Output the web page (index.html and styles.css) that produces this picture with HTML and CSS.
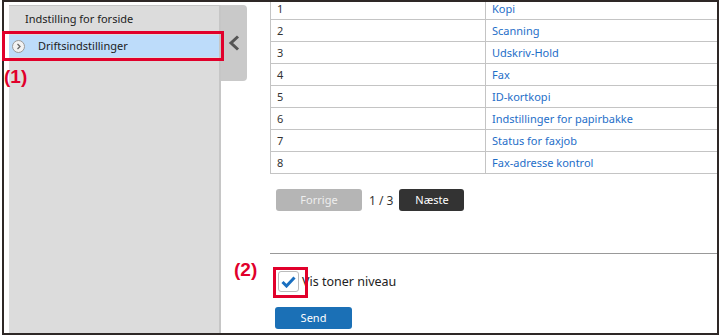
FILE: index.html
```html
<!DOCTYPE html>
<html lang="da">

<head>
    <meta charset="UTF-8">
    <meta name="viewport" content="width=device-width, initial-scale=1.0">
    <title>Driftsindstillinger</title>
    <link rel="stylesheet" href="styles.css">
</head>

<body>
    <div class="page">
        <div class="frame">
            <div class="sidebar">
                <div class="item">Indstilling for forside</div>
                <div class="item active">
                    <span class="circle">
                        <svg width="7" height="7" viewBox="0 0 7 7"><path d="M2.5 1 L5 3.5 L2.5 6" fill="none" stroke="#666" stroke-width="1.3"/></svg>
                    </span>
                    Driftsindstillinger
                </div>
            </div>
            <div class="tab">
                <svg width="12" height="16" viewBox="0 0 12 16"><path d="M10 1.5 L3 8 L10 14.5" fill="none" stroke="#555" stroke-width="3"/></svg>
            </div>
            <div class="main">
                <table class="list">
                    <tr><td class="num">1</td><td><a href="#">Kopi</a></td></tr>
                    <tr><td class="num">2</td><td><a href="#">Scanning</a></td></tr>
                    <tr><td class="num">3</td><td><a href="#">Udskriv-Hold</a></td></tr>
                    <tr><td class="num">4</td><td><a href="#">Fax</a></td></tr>
                    <tr><td class="num">5</td><td><a href="#">ID-kortkopi</a></td></tr>
                    <tr><td class="num">6</td><td><a href="#">Indstillinger for papirbakke</a></td></tr>
                    <tr><td class="num">7</td><td><a href="#">Status for faxjob</a></td></tr>
                    <tr><td class="num">8</td><td><a href="#">Fax-adresse kontrol</a></td></tr>
                </table>

                <div class="pager">
                    <span class="btn prev">Forrige</span>
                    <span class="count">1 / 3</span>
                    <span class="btn next">Næste</span>
                </div>

                <div class="rule"></div>

                <label class="check">
                    <span class="box">
                        <svg width="15" height="12" viewBox="0 0 15 12"><path d="M1.5 6 L5.5 10 L13.5 1.5" fill="none" stroke="#1a6fc0" stroke-width="3"/></svg>
                    </span>
                    Vis toner niveau
                </label>

                <span class="send">Send</span>
            </div>
        </div>

        <!-- markeringer -->
        <div class="mark mark1"></div>
        <div class="label label1">(1)</div>
        <div class="mark mark2"></div>
        <div class="label label2">(2)</div>
    </div>
</body>

</html>
```

FILE: styles.css
```css
body {
    margin: 0;
    font-family: "Noto Sans", "Open Sans", sans-serif;
    color: #222;
}

.page {
    position: relative;
    width: 720px;
    height: 335px;
    overflow: hidden;
}

.frame {
    display: flex;
    box-sizing: border-box;
    width: 717px;
    height: 335px;
    margin-left: 2px;
    border: 2px solid #2e2826;
    background: #fff;
    overflow: hidden;
}

.sidebar {
    width: 210px;
    margin-left: 5px;
    margin-top: 3px;
    background: #dcdcdc;
    border-top: 1px solid #c4c4c4;
    border-right: 2px solid #c6c6c6;
}

.item {
    height: 26px;
    line-height: 26px;
    padding-left: 16px;
    font-size: 11px;
}

.item.active {
    display: flex;
    align-items: center;
    height: 22px;
    margin-top: 3px;
    padding-left: 3px;
    background: #bddcfa;
}

.circle {
    display: flex;
    align-items: center;
    justify-content: center;
    width: 11px;
    height: 11px;
    margin-right: 13px;
    border: 1px solid #999;
    border-radius: 50%;
    background: #f2f2f2;
}

.tab {
    display: flex;
    align-items: center;
    justify-content: center;
    width: 26px;
    height: 76px;
    margin-top: 3px;
    background: #c9c9c9;
    border-radius: 0 4px 4px 0;
}

.main {
    flex: 1;
    margin-left: 23px;
}

.list {
    width: 100%;
    margin-top: -4px;
    border-collapse: collapse;
    border-left: 1px solid #c4c4c4;
    font-size: 11px;
}

.list td {
    height: 21px;
    padding: 0 0 0 6px;
    border-bottom: 1px solid #c4c4c4;
}

.list .num {
    width: 208px;
    color: #333;
    border-right: 1px solid #c4c4c4;
}

.list a {
    color: #1e6ec8;
    text-decoration: none;
}

.pager {
    display: flex;
    align-items: center;
    margin-top: 15px;
    padding-left: 6px;
    font-size: 11px;
}

.btn {
    height: 22px;
    line-height: 22px;
    text-align: center;
    border-radius: 3px;
}

.prev {
    width: 86px;
    background: #b5b5b5;
    color: #eee;
}

.next {
    width: 65px;
    background: #333;
    color: #fff;
}

.count {
    margin: 0 6px 0 7px;
    color: #333;
    font-size: 12px;
}

.rule {
    margin-top: 42px;
    border-top: 1px solid #999;
}

.check {
    display: flex;
    align-items: center;
    margin-top: 17px;
    padding-left: 8px;
    font-size: 12.5px;
}

.box {
    display: flex;
    align-items: center;
    justify-content: center;
    box-sizing: border-box;
    width: 21px;
    height: 21px;
    margin-right: 3px;
    border: 1px solid #bbb;
    border-radius: 3px;
    background: #fff;
}

.send {
    display: block;
    width: 77px;
    height: 22px;
    line-height: 22px;
    margin-top: 15px;
    margin-left: 5px;
    text-align: center;
    border-radius: 3px;
    background: #1b70b6;
    color: #fff;
    font-size: 11px;
}

.mark {
    position: absolute;
    box-sizing: border-box;
    border: 3px solid #e1002b;
}

.mark1 {
    left: 2px;
    top: 31px;
    width: 222px;
    height: 30px;
}

.mark2 {
    left: 273px;
    top: 267px;
    width: 35px;
    height: 31px;
}

.label {
    position: absolute;
    font-family: "Liberation Sans", Arial, sans-serif;
    font-weight: bold;
    font-size: 19px;
    color: #e1002b;
}

.label1 {
    left: 4px;
    top: 66px;
}

.label2 {
    left: 234px;
    top: 259px;
}
```
